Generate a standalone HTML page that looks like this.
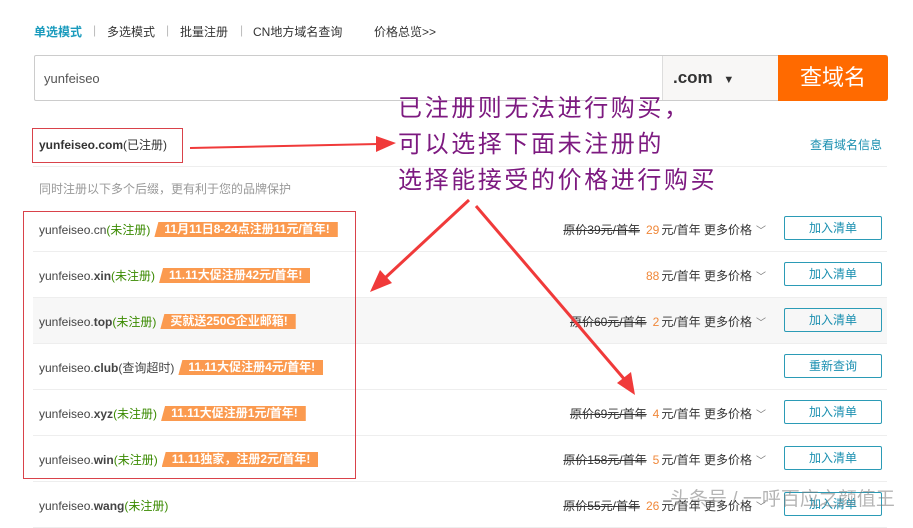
<!DOCTYPE html>
<html><head><meta charset="utf-8"><style>
*{margin:0;padding:0;box-sizing:border-box}
body{width:913px;height:514px;background:#fff;font-family:"Liberation Sans","Noto Sans CJK SC",sans-serif;position:relative;overflow:hidden;color:#333}
.a{position:absolute;white-space:nowrap}
.tb{position:absolute;top:23px;font-size:12px;color:#333;white-space:nowrap}
.sp{position:absolute;top:23px;font-size:12px;color:#bbb}
.row{position:absolute;left:33px;width:854px;height:46px;border-bottom:1px solid #eee}
.dn{position:absolute;left:6px;top:15px;font-size:12px;color:#444}
.g{color:#3a8a00}
.tag{display:inline-block;background:#fb9a4f;color:#fff;font-size:12px;font-weight:bold;height:15px;line-height:15px;padding:0 8px 0 10px;margin-left:4px;vertical-align:1px;clip-path:polygon(4px 0,100% 0,100% 100%,0 100%)}
.pr{position:absolute;right:121px;top:15px;font-size:12px;color:#333}
.pr s{color:#333;margin-right:6px}
.pr .o{color:#f0883a;margin-right:2px}
.chev{color:#777;font-size:10px;margin-left:4px}
.btn{position:absolute;left:751px;top:10px;width:98px;height:24px;border:1px solid #2b9bb6;border-radius:2px;color:#1a8fb0;font-size:12px;text-align:center;line-height:22px}
</style></head><body>
<div class="tb" style="left:34px;color:#1a9bbd;font-weight:bold">单选模式</div>
<div class="sp" style="left:93px">|</div>
<div class="tb" style="left:107px">多选模式</div>
<div class="sp" style="left:166px">|</div>
<div class="tb" style="left:180px">批量注册</div>
<div class="sp" style="left:240px">|</div>
<div class="tb" style="left:253px">CN地方域名查询</div>
<div class="tb" style="left:374px">价格总览&gt;&gt;</div>
<div class="a" style="left:34px;top:55px;width:854px;height:46px;border:1px solid #ccc;border-radius:2px"></div>
<div class="a" style="left:44px;top:71px;font-size:13px;color:#555">yunfeiseo</div>
<div class="a" style="left:662px;top:56px;width:116px;height:44px;background:#f8f7f6;border-left:1px solid #ddd"></div>
<div class="a" style="left:673px;top:68px;font-size:17px;font-weight:bold;color:#333">.com <span style="font-size:11px;margin-left:6px">▼</span></div>
<div class="a" style="left:778px;top:55px;width:110px;height:46px;background:#ff6a00;border-radius:0 3px 3px 0;color:#fff;font-size:22px;text-align:center;line-height:46px">查域名</div>

<div class="a" style="left:32px;top:128px;width:151px;height:35px;border:1px solid #d9424a"></div>
<div class="a" style="left:39px;top:136px;font-size:12px;color:#333"><b>yunfeiseo.com</b>(已注册)</div>
<div class="a" style="left:33px;top:166px;width:854px;height:1px;background:#eee"></div>
<div class="a" style="left:810px;top:136px;font-size:12px;color:#1a8fb0">查看域名信息</div>
<div class="a" style="left:39px;top:180px;font-size:12px;color:#999">同时注册以下多个后缀，更有利于您的品牌保护</div>

<div class="row" style="top:206px"><div class="dn">yunfeiseo.cn<span class="g">(未注册)</span><span class="tag">11月11日8-24点注册11元/首年!</span></div><div class="pr"><s>原价39元/首年</s><span class="o">29</span>元/首年 更多价格<span class="chev">﹀</span></div><div class="btn">加入清单</div></div>
<div class="row" style="top:252px"><div class="dn">yunfeiseo.<b>xin</b><span class="g">(未注册)</span><span class="tag">11.11大促注册42元/首年!</span></div><div class="pr"><span class="o">88</span>元/首年 更多价格<span class="chev">﹀</span></div><div class="btn">加入清单</div></div>
<div class="row" style="top:298px;background:#f7f7f7"><div class="dn">yunfeiseo.<b>top</b><span class="g">(未注册)</span><span class="tag">买就送250G企业邮箱!</span></div><div class="pr"><s>原价60元/首年</s><span class="o">2</span>元/首年 更多价格<span class="chev">﹀</span></div><div class="btn">加入清单</div></div>
<div class="row" style="top:344px"><div class="dn">yunfeiseo.<b>club</b>(查询超时)<span class="tag">11.11大促注册4元/首年!</span></div><div class="btn">重新查询</div></div>
<div class="row" style="top:390px"><div class="dn">yunfeiseo.<b>xyz</b><span class="g">(未注册)</span><span class="tag">11.11大促注册1元/首年!</span></div><div class="pr"><s>原价69元/首年</s><span class="o">4</span>元/首年 更多价格<span class="chev">﹀</span></div><div class="btn">加入清单</div></div>
<div class="row" style="top:436px"><div class="dn">yunfeiseo.<b>win</b><span class="g">(未注册)</span><span class="tag">11.11独家，注册2元/首年!</span></div><div class="pr"><s>原价158元/首年</s><span class="o">5</span>元/首年 更多价格<span class="chev">﹀</span></div><div class="btn">加入清单</div></div>
<div class="row" style="top:482px"><div class="dn">yunfeiseo.<b>wang</b><span class="g">(未注册)</span></div><div class="pr"><s>原价55元/首年</s><span class="o">26</span>元/首年 更多价格<span class="chev">﹀</span></div><div class="btn">加入清单</div></div>

<div class="a" style="left:23px;top:211px;width:333px;height:268px;border:1px solid #d9424a"></div>

<div class="a" style="left:398px;top:91px;font-size:24px;line-height:36px;letter-spacing:2.6px;color:#7d1a80;font-family:'Liberation Sans','Noto Sans CJK SC',sans-serif">已注册则无法进行购买，<br>可以选择下面未注册的<br>选择能接受的价格进行购买</div>

<svg class="a" style="left:0;top:0" width="913" height="514">
<g fill="#f03a3a" stroke="#f03a3a">
<line x1="190" y1="148" x2="378" y2="144" stroke-width="2"/>
<polygon points="376,136 396,143 376,152" stroke="none"/>
<line x1="469" y1="200" x2="385" y2="278" stroke-width="3"/>
<polygon points="370,292 380,270 392,283" stroke="none"/>
<line x1="476" y1="206" x2="625" y2="380" stroke-width="3"/>
<polygon points="635,395 617,383 631,372" stroke="none"/>
</g>
</svg>
<div class="a" style="left:670px;top:484px;font-size:19px;color:rgba(120,120,120,0.55)">头条号 / 一呼百应之颜值王</div>
</body></html>
